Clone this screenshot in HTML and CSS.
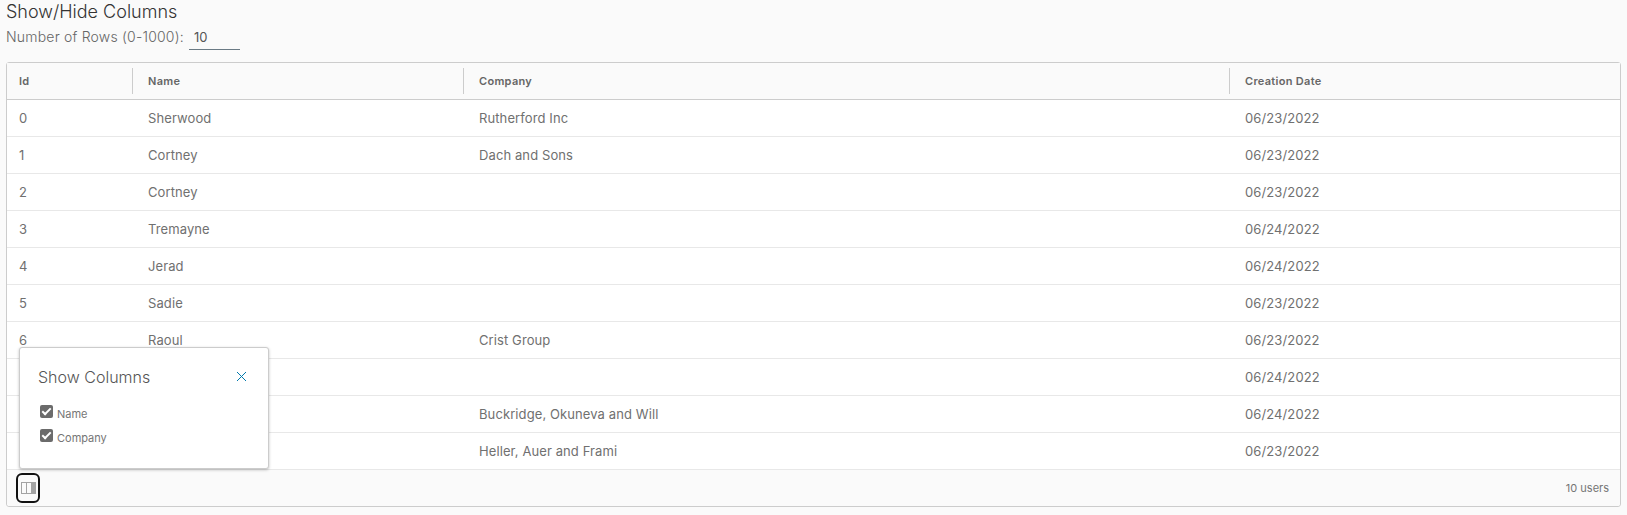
FILE: index.html
```html
<!DOCTYPE html>
<html lang="en">
<head>
    <meta charset="UTF-8">
    <title>Show/Hide Columns</title>
    <link rel="stylesheet" href="styles.css">
</head>
<body>
<h1 class="page-title">Show/Hide Columns</h1>
<div class="rows-field">
    <label for="rows">Number of Rows (0-1000):</label>
    <input type="text" id="rows" value="10">
</div>
<div class="datagrid">
    <table>
        <thead>
            <tr>
                <th class="col-id">Id</th>
                <th class="col-name">Name</th>
                <th class="col-company">Company</th>
                <th>Creation Date</th>
            </tr>
        </thead>
        <tbody>
            <tr><td>0</td><td>Sherwood</td><td>Rutherford Inc</td><td>06/23/2022</td></tr>
            <tr><td>1</td><td>Cortney</td><td>Dach and Sons</td><td>06/23/2022</td></tr>
            <tr><td>2</td><td>Cortney</td><td></td><td>06/23/2022</td></tr>
            <tr><td>3</td><td>Tremayne</td><td></td><td>06/24/2022</td></tr>
            <tr><td>4</td><td>Jerad</td><td></td><td>06/24/2022</td></tr>
            <tr><td>5</td><td>Sadie</td><td></td><td>06/23/2022</td></tr>
            <tr><td>6</td><td>Raoul</td><td>Crist Group</td><td>06/23/2022</td></tr>
            <tr><td>7</td><td></td><td></td><td>06/24/2022</td></tr>
            <tr><td>8</td><td></td><td>Buckridge, Okuneva and Will</td><td>06/24/2022</td></tr>
            <tr><td>9</td><td></td><td>Heller, Auer and Frami</td><td>06/23/2022</td></tr>
        </tbody>
    </table>
    <div class="grid-footer">
        <button type="button" class="columns-toggle" aria-label="Show or hide columns">
            <svg width="15" height="12" viewBox="0 0 15 12">
                <rect x="0.5" y="0.5" width="14" height="11" fill="#fafafa" stroke="#a3a3a3"/>
                <rect x="5" y="1" width="1" height="10" fill="#a3a3a3"/>
                <rect x="10" y="1" width="5" height="10" fill="#a3a3a3"/>
            </svg>
        </button>
        <span class="user-count">10 users</span>
    </div>
    <div class="columns-popover">
        <div class="popover-head">
            <span class="popover-title">Show Columns</span>
            <svg class="popover-close" width="11" height="11" viewBox="0 0 11 11">
                <path d="M1 1 L10 10 M10 1 L1 10" stroke="#0079ad" stroke-width="1" fill="none"/>
            </svg>
        </div>
        <label class="column-option"><span class="checkmark"></span>Name</label>
        <label class="column-option"><span class="checkmark"></span>Company</label>
    </div>
</div>
</body>
</html>
```

FILE: styles.css
```css
body {
    background-color: #fafafa;
    color: #666;
    font-family: Inter, sans-serif;
    font-weight: 300;
    margin: 0;
    padding: 0 6px;
}

.page-title {
    color: #333;
    font-size: 18px;
    font-weight: 300;
    line-height: 24px;
    margin: 0;
}

.rows-field {
    display: flex;
    align-items: flex-start;
    font-size: 14px;
    letter-spacing: 0.2px;
    height: 26px;
    margin-bottom: 12px;
    line-height: 26px;
}

.rows-field input {
    width: 46px;
    height: 25px;
    margin-left: 5px;
    padding: 0 0 0 5px;
    border: none;
    border-bottom: 1px solid #6a7a84;
    background: transparent;
    color: #555;
    font-family: inherit;
    font-size: 13px;
    font-weight: 400;
}

.datagrid {
    position: relative;
    background-color: #fff;
    border: 1px solid #ccc;
    border-radius: 3px;
}

table {
    width: 100%;
    border-collapse: collapse;
    table-layout: fixed;
}

th, td {
    box-sizing: border-box;
    padding: 0 0 0 15px;
}

th {
    height: 36px;
    background-color: #fafafa;
    border-bottom: 1px solid #ccc;
    color: #666;
    font-size: 11px;
    font-weight: 600;
    letter-spacing: 0.3px;
    text-align: left;
    position: relative;
}

th:first-child, td:first-child {
    padding-left: 12px;
}

.col-id { width: 126px; }
.col-name { width: 331px; }
.col-company { width: 766px; }

.col-id::after, .col-name::after, .col-company::after {
    content: "";
    position: absolute;
    right: 0;
    top: 5px;
    bottom: 5px;
    width: 1px;
    background-color: #ccc;
}

td {
    height: 37px;
    border-bottom: 1px solid #e8e8e8;
    font-size: 13px;
    font-weight: 400;
    letter-spacing: 0.1px;
    color: #707070;
}

.grid-footer {
    display: flex;
    align-items: center;
    justify-content: space-between;
    height: 36px;
    padding: 0 11px 0 9px;
    background-color: #fafafa;
    border-radius: 0 0 3px 3px;
}

.columns-toggle {
    display: flex;
    align-items: center;
    justify-content: center;
    width: 24px;
    height: 30px;
    padding: 0;
    background: transparent;
    border: 2px solid #111;
    border-radius: 6px;
}

.user-count {
    font-size: 11px;
    font-weight: 400;
    color: #757575;
}

.columns-popover {
    position: absolute;
    left: 12px;
    bottom: 37px;
    box-sizing: border-box;
    width: 250px;
    height: 122px;
    background-color: #fff;
    border: 1px solid #ccc;
    border-radius: 3px;
    box-shadow: 0 1px 3px rgba(0, 0, 0, 0.25);
}

.popover-head {
    display: flex;
    align-items: center;
    justify-content: space-between;
    padding: 19px 21px 15px 18px;
}

.popover-title {
    font-size: 16px;
    font-weight: 300;
    color: #555;
}

.column-option {
    display: flex;
    align-items: center;
    height: 24px;
    padding-left: 20px;
    font-size: 11px;
    font-weight: 400;
    color: #757575;
}

.checkmark {
    position: relative;
    top: -2px;
    width: 13px;
    height: 13px;
    margin-right: 4px;
    background-color: #6b6b6b;
    border-radius: 2px;
}

.checkmark::after {
    content: "";
    position: absolute;
    left: 4px;
    top: 1px;
    width: 3px;
    height: 7px;
    border: solid #fff;
    border-width: 0 2px 2px 0;
    transform: rotate(45deg);
}
```
